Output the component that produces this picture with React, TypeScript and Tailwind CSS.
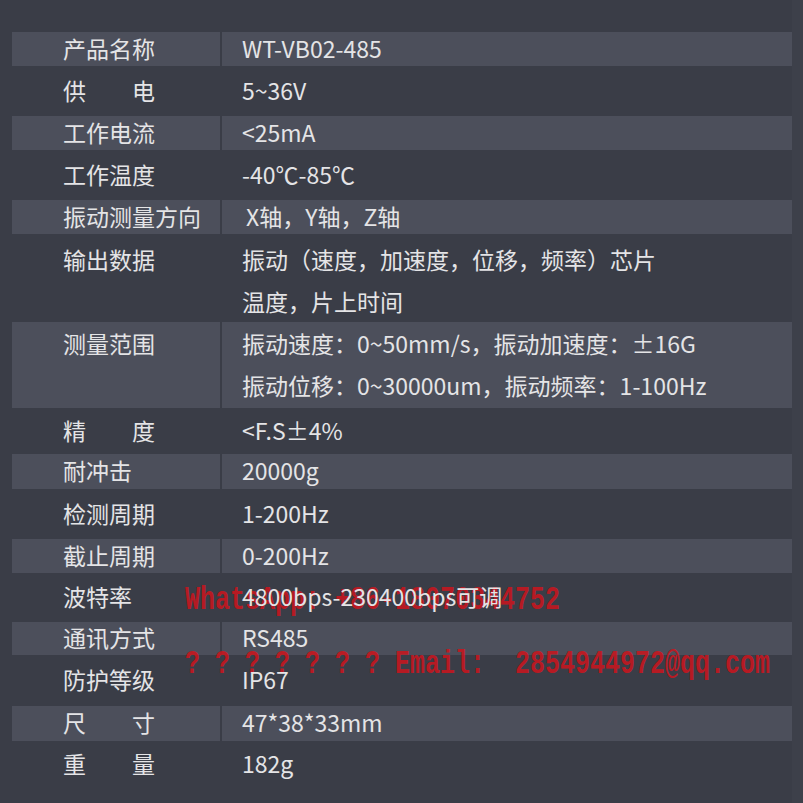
import React from "react";

type Row = {
  label: string;
  value: string[];
  h: string;
  light?: boolean;
  pad?: string;
  indent?: boolean;
};

const rows: Row[] = [
  { label: "产品名称", value: ["WT-VB02-485"], h: "h-[34px]", light: true },
  { label: "供　　电", value: ["5~36V"], h: "h-[50px]" },
  { label: "工作电流", value: ["<25mA"], h: "h-[34px]", light: true },
  { label: "工作温度", value: ["-40℃-85℃"], h: "h-[50px]" },
  {
    label: "振动测量方向",
    value: ["X轴，Y轴，Z轴"],
    h: "h-[34px]",
    light: true,
    indent: true,
  },
  {
    label: "输出数据",
    value: ["振动（速度，加速度，位移，频率）芯片", "温度，片上时间"],
    h: "h-[88px]",
    pad: "pt-[4px]",
  },
  {
    label: "测量范围",
    value: [
      "振动速度：0~50mm/s，振动加速度：±16G",
      "振动位移：0~30000um，振动频率：1-100Hz",
    ],
    h: "h-[86px]",
    light: true,
    pad: "pt-[0px]",
  },
  { label: "精　　度", value: ["<F.S±4%"], h: "h-[46px]" },
  { label: "耐冲击", value: ["20000g"], h: "h-[35px]", light: true },
  { label: "检测周期", value: ["1-200Hz"], h: "h-[50px]" },
  { label: "截止周期", value: ["0-200Hz"], h: "h-[34px]", light: true },
  { label: "波特率", value: ["4800bps-230400bps可调"], h: "h-[49px]" },
  { label: "通讯方式", value: ["RS485"], h: "h-[33px]", light: true },
  { label: "防护等级", value: ["IP67"], h: "h-[51px]" },
  { label: "尺　　寸", value: ["47*38*33mm"], h: "h-[35px]", light: true },
  { label: "重　　量", value: ["182g"], h: "h-[62px]", pad: "pt-[1px]" },
];

const SpecRow = ({ row }: { row: Row }) => {
  const cell = row.light ? "bg-[#4c4f5b]" : "";
  const align = row.pad ? "items-start " + row.pad : "items-center pb-[3px]";
  return (
    <div className={"flex gap-[2px] " + row.h}>
      <div className={"w-[208px] flex pl-[51px] " + align + " " + cell}>
        <span className="relative z-10 leading-[42px]">{row.label}</span>
      </div>
      <div
        className={
          "flex-1 flex flex-col " +
          (row.indent ? "pl-[24px] " : "pl-[20px] ") +
          (row.pad ? "justify-start " + row.pad + " " : "justify-center pb-[3px] ") +
          cell
        }
      >
        {row.value.map((line) => (
          <p key={line} className="relative z-10 leading-[42px] whitespace-nowrap">
            {line}
          </p>
        ))}
      </div>
    </div>
  );
};

export default function App() {
  return (
    <div
      className="relative w-[803px] h-[803px] overflow-hidden bg-[#3a3d47] text-[#e4e4e6] text-[23px]"
      style={{ fontFamily: '"Noto Sans CJK SC", "Noto Sans", sans-serif' }}
    >
      <div className="flex h-full">
        <div className="w-[792px] pt-[32px] pl-[12px]">
          {rows.map((row) => (
            <SpecRow key={row.label} row={row} />
          ))}
        </div>
        <div className="flex-1 bg-[#3d404a]" />
      </div>

      {/* watermark laid over the table, under the cell text */}
      <div className="absolute left-[185px] top-[583px] text-[25px] font-bold leading-none text-[#c8161e]/90 whitespace-pre font-['Liberation_Mono',monospace] origin-top-left scale-y-[1.35]">
        WhatsApp: +86-18070344752
      </div>
      <div className="absolute left-[185px] top-[647px] text-[25px] font-bold leading-none text-[#c8161e]/90 whitespace-pre font-['Liberation_Mono',monospace] origin-top-left scale-y-[1.35]">
        ? ? ? ? ? ? ? Email:  2854944972@qq.com
      </div>
    </div>
  );
}
